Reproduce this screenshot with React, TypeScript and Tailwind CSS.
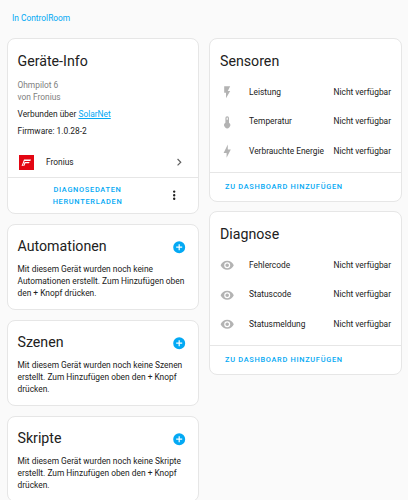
import React from "react";

const P = {
  flash: "M7,2V13H10V22L17,10H13L17,2H7Z",
  bolt: "M11 15H6L13 1V9H18L11 23V15Z",
  thermo: "M15 13V5A3 3 0 0 0 9 5V13A5 5 0 1 0 15 13M12 4A1 1 0 0 1 13 5V8H11V5A1 1 0 0 1 12 4Z",
  eye: "M12,9A3,3 0 0,0 9,12A3,3 0 0,0 12,15A3,3 0 0,0 15,12A3,3 0 0,0 12,9M12,17A5,5 0 0,1 7,12A5,5 0 0,1 12,7A5,5 0 0,1 17,12A5,5 0 0,1 12,17M12,4.5C7,4.5 2.73,7.61 1,12C2.73,16.39 7,19.5 12,19.5C17,19.5 21.27,16.39 23,12C21.27,7.61 17,4.5 12,4.5Z",
  plus: "M17,13H13V17H11V13H7V11H11V7H13V11H17M12,2A10,10 0 0,0 2,12A10,10 0 0,0 12,22A10,10 0 0,0 22,12A10,10 0 0,0 12,2Z",
  dots: "M12,16A2,2 0 0,1 14,18A2,2 0 0,1 12,20A2,2 0 0,1 10,18A2,2 0 0,1 12,16M12,10A2,2 0 0,1 14,12A2,2 0 0,1 12,14A2,2 0 0,1 10,12A2,2 0 0,1 12,10M12,4A2,2 0 0,1 14,6A2,2 0 0,1 12,8A2,2 0 0,1 10,6A2,2 0 0,1 12,4Z",
  chev: "M8.59,16.58L13.17,12L8.59,7.41L10,6L16,12L10,18L8.59,16.58Z",
};

function Icon({ d, className }: { d: string; className: string }) {
  return (
    <svg viewBox="0 0 24 24" className={className} fill="currentColor">
      <path d={d} />
    </svg>
  );
}

function Card({ children, className = "" }: { children: React.ReactNode; className?: string }) {
  return <div className={"bg-white border border-[#e6e6e6] rounded-[8px] " + className}>{children}</div>;
}

function Empty({ title, lines }: { title: string; lines: string[] }) {
  return (
    <Card className="h-[86px] pl-[9.5px] pr-[11.5px] pt-[10px] shrink-0">
      <div className="flex items-center justify-between h-[24px]">
        <span className="text-[14.2px] text-[#212121]">{title}</span>
        <Icon d={P.plus} className="w-[14.4px] h-[14.4px] text-[#03a9f4]" />
      </div>
      <div className="mt-[4px] text-[8.4px] leading-[12px] text-[#212121] whitespace-nowrap">
        {lines.map((l) => (
          <div key={l}>{l}</div>
        ))}
      </div>
    </Card>
  );
}

function Entities({ title, rows, className = "" }: { title: string; rows: [string, string][]; className?: string }) {
  return (
    <Card className={"h-[164px] flex flex-col " + className}>
      <div className="pl-[10px] pt-[10px] h-[36px] text-[14.2px] leading-[24px] text-[#212121]">{title}</div>
      <div className="flex-1 flex flex-col pl-[10px] pr-[10px] pt-[3px]">
        {rows.map(([d, label]) => (
          <div key={label} className="flex items-center h-[29.2px] text-[8.4px] text-[#212121] whitespace-nowrap">
            <div className="w-[29px] flex shrink-0">
              <Icon d={d} className="w-[14.4px] h-[14.4px] text-[#b3b3b3]" />
            </div>
            <span className="flex-1">{label}</span>
            <span>Nicht verfügbar</span>
          </div>
        ))}
      </div>
      <div className="border-t border-[#e6e6e6] h-[29px] flex items-center pl-[15px] text-[7.4px] font-medium tracking-[0.7px] text-[#03a9f4] whitespace-nowrap">
        ZU DASHBOARD HINZUFÜGEN
      </div>
    </Card>
  );
}

export default function App() {
  return (
    <div className="w-[408px] h-[500px] overflow-hidden bg-[#fafafa] font-['Roboto',sans-serif]">
      <div className="h-[38px] pl-[12px] pt-[12px] text-[8.4px] leading-[12px] text-[#03a9f4]">In ControlRoom</div>
      <div className="flex items-start pl-[7px] gap-[10px]">
        <div className="w-[192px] flex flex-col gap-[10px]">
          <Card className="h-[176px] flex flex-col">
            <div className="pl-[9.5px] pt-[10px] h-[36px] text-[14.2px] leading-[24px] text-[#212121]">Geräte-Info</div>
            <div className="pl-[9.5px] text-[8.4px] leading-[12px]">
              <div className="pt-[4px] text-[#808080]">Ohmpilot 6</div>
              <div className="text-[#808080]">von Fronius</div>
              <div className="mt-[5px] text-[#212121]">
                Verbunden über <span className="text-[#03a9f4] underline">SolarNet</span>
              </div>
              <div className="mt-[5px] text-[#212121]">Firmware: 1.0.28-2</div>
            </div>
            <div className="flex items-center flex-1 pl-[11px] pr-[12px] pt-[10px] text-[8.4px] text-[#212121]">
              <div className="w-[15px] h-[15px] bg-[#e30613] flex items-center justify-center shrink-0">
                <svg viewBox="0 0 15 15" className="w-[15px] h-[15px]" fill="#fff">
                  <path d="M5 4.5H12L11.3 6H5.6L3.6 11H2.6Z" />
                  <path d="M5.6 7H10.6L10 8.3H6.4L5.2 11H4.2Z" />
                </svg>
              </div>
              <span className="ml-[12px] flex-1">Fronius</span>
              <Icon d={P.chev} className="w-[14.4px] h-[14.4px] text-[#616161]" />
            </div>
            <div className="border-t border-[#e6e6e6] h-[36px] flex items-center shrink-0">
              <div className="w-[159px] text-center text-[7.4px] leading-[12px] font-medium tracking-[0.7px] text-[#03a9f4]">
                DIAGNOSEDATEN
                <br />
                HERUNTERLADEN
              </div>
              <Icon d={P.dots} className="w-[14.4px] h-[14.4px] text-[#212121]" />
            </div>
          </Card>
          <Empty title="Automationen" lines={["Mit diesem Gerät wurden noch keine", "Automationen erstellt. Zum Hinzufügen oben", "den + Knopf drücken."]} />
          <Empty title="Szenen" lines={["Mit diesem Gerät wurden noch keine Szenen", "erstellt. Zum Hinzufügen oben den + Knopf", "drücken."]} />
          <Empty title="Skripte" lines={["Mit diesem Gerät wurden noch keine Skripte", "erstellt. Zum Hinzufügen oben den + Knopf", "drücken."]} />
        </div>
        <div className="w-[193px] flex flex-col gap-[9px]">
          <Entities title="Sensoren" rows={[[P.flash, "Leistung"], [P.thermo, "Temperatur"], [P.bolt, "Verbrauchte Energie"]]} />
          <Entities title="Diagnose" rows={[[P.eye, "Fehlercode"], [P.eye, "Statuscode"], [P.eye, "Statusmeldung"]]} />
        </div>
      </div>
    </div>
  );
}
